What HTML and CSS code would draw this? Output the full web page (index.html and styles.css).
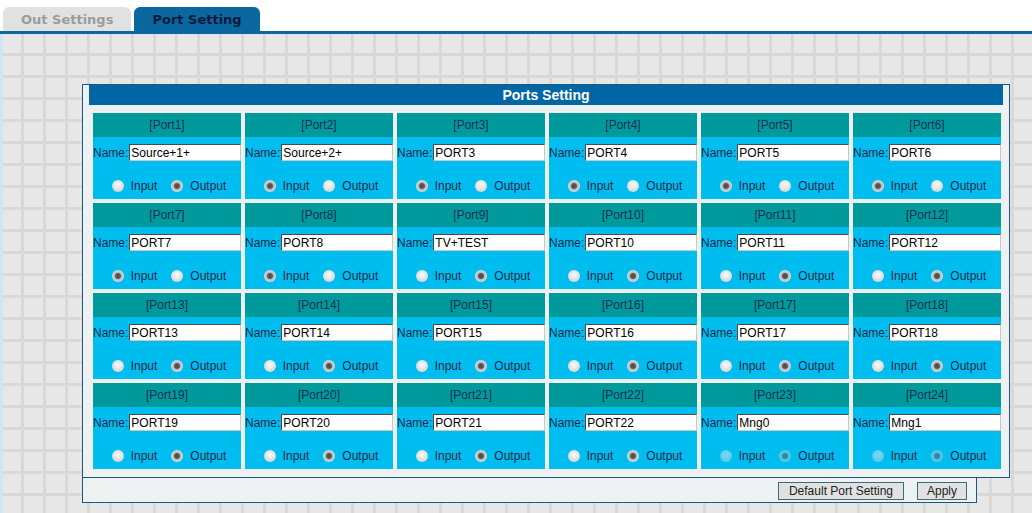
FILE: index.html
```html
<html>
	<head>
		<link rel="stylesheet" href="styles.css">
	</head>
	<body>
		<div class="tabs">
			<div class="tab">Out Settings</div>
			<div class="tab active">Port Setting</div>
		</div>
		<div class="main">
			<div class="panel">
				<div class="title">Ports Setting</div>
				<div class="ports">
					<div class="port"><div class="port-head">[Port1]</div><div class="port-body"><div class="port-name">Name:<input type="text" value="Source+1+"></div><div class="port-dir"><label><input type="radio" name="p1">Input</label><label><input type="radio" name="p1" checked>Output</label></div></div></div>
					<div class="port"><div class="port-head">[Port2]</div><div class="port-body"><div class="port-name">Name:<input type="text" value="Source+2+"></div><div class="port-dir"><label><input type="radio" name="p2" checked>Input</label><label><input type="radio" name="p2">Output</label></div></div></div>
					<div class="port"><div class="port-head">[Port3]</div><div class="port-body"><div class="port-name">Name:<input type="text" value="PORT3"></div><div class="port-dir"><label><input type="radio" name="p3" checked>Input</label><label><input type="radio" name="p3">Output</label></div></div></div>
					<div class="port"><div class="port-head">[Port4]</div><div class="port-body"><div class="port-name">Name:<input type="text" value="PORT4"></div><div class="port-dir"><label><input type="radio" name="p4" checked>Input</label><label><input type="radio" name="p4">Output</label></div></div></div>
					<div class="port"><div class="port-head">[Port5]</div><div class="port-body"><div class="port-name">Name:<input type="text" value="PORT5"></div><div class="port-dir"><label><input type="radio" name="p5" checked>Input</label><label><input type="radio" name="p5">Output</label></div></div></div>
					<div class="port"><div class="port-head">[Port6]</div><div class="port-body"><div class="port-name">Name:<input type="text" value="PORT6"></div><div class="port-dir"><label><input type="radio" name="p6" checked>Input</label><label><input type="radio" name="p6">Output</label></div></div></div>

					<div class="port"><div class="port-head">[Port7]</div><div class="port-body"><div class="port-name">Name:<input type="text" value="PORT7"></div><div class="port-dir"><label><input type="radio" name="p7" checked>Input</label><label><input type="radio" name="p7">Output</label></div></div></div>
					<div class="port"><div class="port-head">[Port8]</div><div class="port-body"><div class="port-name">Name:<input type="text" value="PORT8"></div><div class="port-dir"><label><input type="radio" name="p8" checked>Input</label><label><input type="radio" name="p8">Output</label></div></div></div>
					<div class="port"><div class="port-head">[Port9]</div><div class="port-body"><div class="port-name">Name:<input type="text" value="TV+TEST"></div><div class="port-dir"><label><input type="radio" name="p9">Input</label><label><input type="radio" name="p9" checked>Output</label></div></div></div>
					<div class="port"><div class="port-head">[Port10]</div><div class="port-body"><div class="port-name">Name:<input type="text" value="PORT10"></div><div class="port-dir"><label><input type="radio" name="p10">Input</label><label><input type="radio" name="p10" checked>Output</label></div></div></div>
					<div class="port"><div class="port-head">[Port11]</div><div class="port-body"><div class="port-name">Name:<input type="text" value="PORT11"></div><div class="port-dir"><label><input type="radio" name="p11">Input</label><label><input type="radio" name="p11" checked>Output</label></div></div></div>
					<div class="port"><div class="port-head">[Port12]</div><div class="port-body"><div class="port-name">Name:<input type="text" value="PORT12"></div><div class="port-dir"><label><input type="radio" name="p12">Input</label><label><input type="radio" name="p12" checked>Output</label></div></div></div>

					<div class="port"><div class="port-head">[Port13]</div><div class="port-body"><div class="port-name">Name:<input type="text" value="PORT13"></div><div class="port-dir"><label><input type="radio" name="p13">Input</label><label><input type="radio" name="p13" checked>Output</label></div></div></div>
					<div class="port"><div class="port-head">[Port14]</div><div class="port-body"><div class="port-name">Name:<input type="text" value="PORT14"></div><div class="port-dir"><label><input type="radio" name="p14">Input</label><label><input type="radio" name="p14" checked>Output</label></div></div></div>
					<div class="port"><div class="port-head">[Port15]</div><div class="port-body"><div class="port-name">Name:<input type="text" value="PORT15"></div><div class="port-dir"><label><input type="radio" name="p15">Input</label><label><input type="radio" name="p15" checked>Output</label></div></div></div>
					<div class="port"><div class="port-head">[Port16]</div><div class="port-body"><div class="port-name">Name:<input type="text" value="PORT16"></div><div class="port-dir"><label><input type="radio" name="p16">Input</label><label><input type="radio" name="p16" checked>Output</label></div></div></div>
					<div class="port"><div class="port-head">[Port17]</div><div class="port-body"><div class="port-name">Name:<input type="text" value="PORT17"></div><div class="port-dir"><label><input type="radio" name="p17">Input</label><label><input type="radio" name="p17" checked>Output</label></div></div></div>
					<div class="port"><div class="port-head">[Port18]</div><div class="port-body"><div class="port-name">Name:<input type="text" value="PORT18"></div><div class="port-dir"><label><input type="radio" name="p18">Input</label><label><input type="radio" name="p18" checked>Output</label></div></div></div>

					<div class="port"><div class="port-head">[Port19]</div><div class="port-body"><div class="port-name">Name:<input type="text" value="PORT19"></div><div class="port-dir"><label><input type="radio" name="p19">Input</label><label><input type="radio" name="p19" checked>Output</label></div></div></div>
					<div class="port"><div class="port-head">[Port20]</div><div class="port-body"><div class="port-name">Name:<input type="text" value="PORT20"></div><div class="port-dir"><label><input type="radio" name="p20">Input</label><label><input type="radio" name="p20" checked>Output</label></div></div></div>
					<div class="port"><div class="port-head">[Port21]</div><div class="port-body"><div class="port-name">Name:<input type="text" value="PORT21"></div><div class="port-dir"><label><input type="radio" name="p21">Input</label><label><input type="radio" name="p21" checked>Output</label></div></div></div>
					<div class="port"><div class="port-head">[Port22]</div><div class="port-body"><div class="port-name">Name:<input type="text" value="PORT22"></div><div class="port-dir"><label><input type="radio" name="p22">Input</label><label><input type="radio" name="p22" checked>Output</label></div></div></div>
					<div class="port"><div class="port-head">[Port23]</div><div class="port-body"><div class="port-name">Name:<input type="text" value="Mng0"></div><div class="port-dir"><label><input type="radio" name="p23" disabled>Input</label><label><input type="radio" name="p23" checked disabled>Output</label></div></div></div>
					<div class="port"><div class="port-head">[Port24]</div><div class="port-body"><div class="port-name">Name:<input type="text" value="Mng1"></div><div class="port-dir"><label><input type="radio" name="p24" disabled>Input</label><label><input type="radio" name="p24" checked disabled>Output</label></div></div></div>
				</div>
			</div>
			<div class="actions">
				<button class="btn-default">Default Port Setting</button><button class="btn-apply">Apply</button>
			</div>
		</div>
	</body>
</html>
```

FILE: styles.css
```css
body{
	margin:0;
	font-family:"Liberation Sans",Arial,sans-serif;
	font-size:12px;
}
.tabs{
	height:31px;
	display:flex;
	align-items:flex-end;
	gap:3px;
	padding-left:3px;
	border-bottom:3px solid #0b67a0;
	background:#fff;
}
.tab{
	height:24px;
	padding:0 18px;
	border-radius:6px 6px 0 0;
	font:bold 13px/26px "DejaVu Sans",Verdana,sans-serif;
	background:#e1e1e1;
	color:#9c9c9c;
}
.tab.active{
	background:#0b67a0;
	color:#0c1a3a;
}
.main{
	height:479px;
	box-sizing:border-box;
	border-left:3px solid #cde6f3;
	padding:50px 0 0 79px;
	background-color:#e7e7e7;
	background-image:linear-gradient(to right,#d8d8d8 3px,transparent 3px),linear-gradient(#d8d8d8 3px,transparent 3px);
	background-size:22px 22px;
	background-position:18px 19px;
}
.panel{
	width:928px;
	box-sizing:border-box;
	border:1px solid #17587e;
	background:#eef1f2;
	padding:0 6px 8px;
}
.title{
	height:20px;
	line-height:21px;
	background:#0066a4;
	color:#fff;
	font-weight:bold;
	font-size:14px;
	text-align:center;
}
.ports{
	display:grid;
	grid-template-columns:repeat(6,148px);
	gap:4px;
	padding:8px 2px 0 4px;
}
.port-head{
	height:24px;
	line-height:24px;
	background:#009a9d;
	color:#17304f;
	text-align:center;
}
.port-body{
	height:62px;
	background:#00bdf0;
	color:#142a4a;
}
.port-name{
	display:flex;
	align-items:center;
	padding-top:7px;
}
.port-name input{
	width:112px;
	height:17px;
	box-sizing:border-box;
	margin:0 0 0 1px;
	padding:0 1px;
	border:1px solid #4a4a4a;
	border-right-color:#c8c8c8;
	border-bottom-color:#c8c8c8;
	background:#fff;
	font:12px "Liberation Sans",Arial,sans-serif;
	color:#000;
	outline:none;
}
.port-dir{
	display:flex;
	justify-content:center;
	align-items:center;
	gap:14px;
	height:14px;
	margin-top:18px;
	padding-left:4px;
}
.port-dir label{
	display:flex;
	align-items:center;
}
.port-dir input{
	appearance:none;
	-webkit-appearance:none;
	width:12px;
	height:12px;
	margin:0 7px 0 0;
	border-radius:50%;
	background:radial-gradient(circle at 50% 40%,#fbfbfb 0,#e4e4e4 45%,#c9c9c9 100%);
}
.port-dir input:checked{
	background:radial-gradient(circle,#4d4d4d 0,#5a5a5a 2.5px,#b9b9b9 3.5px,#dcdcdc 6px);
}
.port-dir input:disabled{
	opacity:.45;
}
.actions{
	width:895px;
	height:25px;
	box-sizing:border-box;
	border:1px solid #17587e;
	border-top:0;
	background:#eef1f2;
	display:flex;
	justify-content:flex-end;
	align-items:flex-start;
	gap:13px;
	padding:4px 9px 0 0;
}
button{
	height:18px;
	padding:0 10px;
	border:1px solid #3b6e72;
	background:#e1e1e1;
	color:#222;
	font:12px "Liberation Sans",Arial,sans-serif;
}
.btn-apply{
	width:50px;
	padding:0;
}
```
